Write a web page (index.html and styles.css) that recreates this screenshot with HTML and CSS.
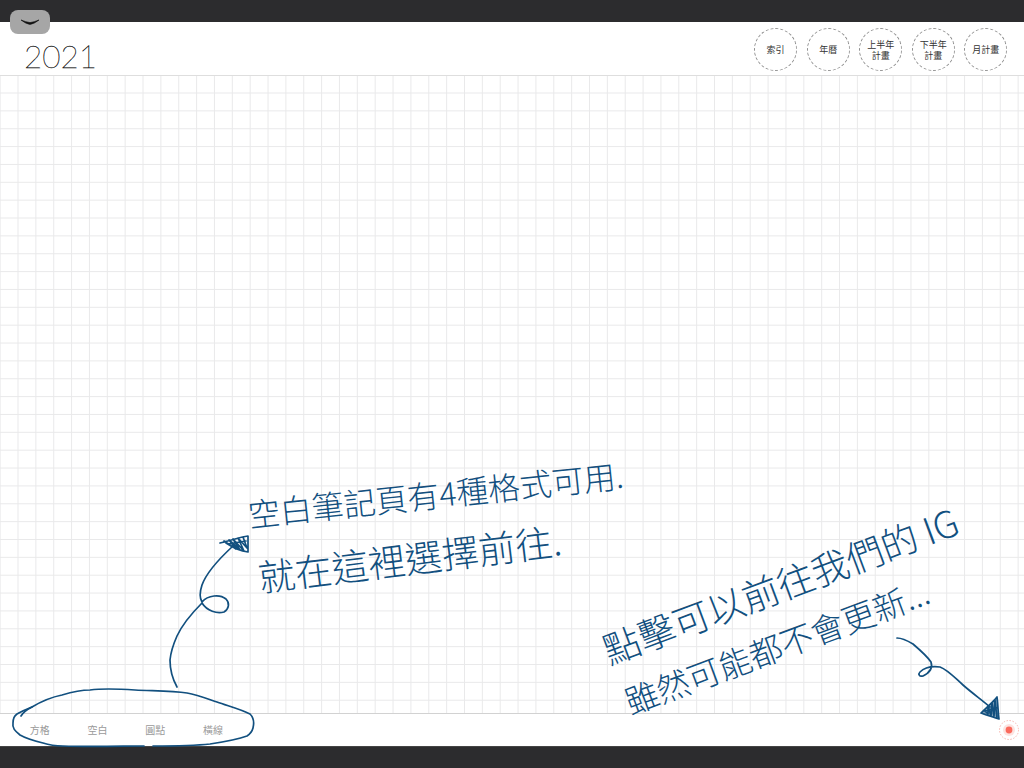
FILE: index.html
```html
<!DOCTYPE html>
<html lang="zh-Hant">
<head>
<meta charset="utf-8">
<title>2021</title>
<link rel="stylesheet" href="styles.css">
</head>
<body>
<div class="page">
  <div class="bar-top"></div>
  <header class="header">
    <h1 class="title">2021</h1>
    <nav class="nav">
      <a class="circle">索引</a>
      <a class="circle">年曆</a>
      <a class="circle">上半年<br>計畫</a>
      <a class="circle">下半年<br>計畫</a>
      <a class="circle">月計畫</a>
    </nav>
  </header>
  <main class="grid"></main>
  <footer class="toolbar">
    <a class="tab">方格</a>
    <a class="tab">空白</a>
    <a class="tab">圓點</a>
    <a class="tab">橫線</a>
    <svg class="record" width="22" height="22" viewBox="0 0 22 22">
      <circle cx="11" cy="11" r="9.5" fill="none" stroke="#f7b5ae" stroke-width="1" stroke-dasharray="1.5 1.5"/>
      <circle cx="11" cy="11" r="6" fill="#fde3e0"/>
      <circle cx="11" cy="11" r="3.4" fill="#fb6a5d"/>
    </svg>
  </footer>
  <div class="bar-bottom"></div>

  <button class="pull">
    <svg width="20" height="6" viewBox="0 0 20 6"><path d="M1 1 Q6 3 10 3.6 Q14 3 19 1 Q14 5 10 5.4 Q6 5 1 1Z" fill="#111" stroke="#111" stroke-width=".6" stroke-linejoin="round"/></svg>
  </button>

  <svg class="ink" width="1024" height="768" viewBox="0 0 1024 768">
    <g fill="none" stroke="#12507f" stroke-width="1.7" stroke-linecap="round" stroke-linejoin="round">
      <path d="M21 716 C24 711 28 709 32 707 C42 701 52 697 62 695 C72 692 80 690 90 690 C105 688 120 689 135 690 C155 691 172 691 187 693 C198 695 208 699 217 702 C228 706 240 709 250 714 C254 718 254 724 253 728 C252 732 250 734 247 736 C236 740 223 742 210 744 C192 746 172 746 153 746"/>
      <path d="M144 746 C125 746 90 747 63 746 C55 746 49 745 43 743 C35 741 27 739 20 735 C15 731 12 728 13 723 C13 719 14 716 17 714 C22 711 27 709 32 707"/>
      <path d="M177 687 C172 678 170 670 170 660 C171 650 173 645 177 636 C183 623 192 613 202 603 C207 611 217 614 224 612 C229 609 230 603 226 599 C220 594 208 595 202 602 C199 597 200 591 202 585 C207 571 220 558 233 546"/>
      <path d="M220 543 C229 541 240 537 248 536 C248 541 248 547 248 552 C241 551 232 547 226 543 M224 541 L236 549 L229 540 L240 550 L233 539 L244 551 L238 538 L247 548 L243 537 M228 544 L246 541"/>
      <path d="M897 638 C903 638 908 641 913 644 C920 650 927 656 931 662 C933 668 929 673 923 676 C919 677 918 674 920 672 C924 668 932 666 940 667 C948 670 955 678 963 685 C972 693 982 700 990 707"/>
      <path d="M981 713 C986 708 993 702 997 697 C998 704 998 712 999 719 C993 717 986 715 981 713Z M985 711 L988 714 L988 706 L991 716 L992 703 L994 716 L995 700 L997 718 M984 711 L997 708" fill="#12507f" fill-opacity=".55"/>
    </g>
  </svg>

  <p class="note note-a">空白筆記頁有4種格式可用.</p>
  <p class="note note-b">就在這裡選擇前往.</p>
  <p class="note note-c">點擊可以前往我們的 IG</p>
  <p class="note note-d">雖然可能都不會更新...</p>
</div>
</body>
</html>
```
FILE: styles.css
```css
* { box-sizing: border-box; }
html, body { margin: 0; padding: 0; }
body {
  width: 1024px;
  height: 768px;
  overflow: hidden;
  background: #fff;
  font-family: "Noto Sans CJK TC", "Liberation Sans", sans-serif;
}
.page {
  position: relative;
  width: 1024px;
  height: 768px;
  display: flex;
  flex-direction: column;
  overflow: hidden;
}
.bar-top { height: 22px; background: #2c2c2e; flex: none; }
.bar-bottom { height: 22px; background: #2c2c2e; flex: none; border-top: 1px solid #444; }
.header {
  height: 54px;
  flex: none;
  display: flex;
  align-items: flex-start;
  justify-content: space-between;
  padding: 6px 16.7px 0 24px;
  background: #fff;
  border-bottom: 1px solid #dedede;
}
.title {
  margin: 10px 0 0;
  font-family: Lato, "Liberation Sans", sans-serif;
  font-weight: 100;
  font-size: 31.5px;
  line-height: 36px;
  color: #111;
  opacity: .99;
  -webkit-text-stroke: .3px #111;
}
.nav { display: flex; gap: 9.55px; }
.circle {
  width: 43px;
  height: 43px;
  border: 1px dashed #8f8f8f;
  border-radius: 50%;
  display: flex;
  align-items: center;
  justify-content: center;
  text-align: center;
  font-size: 9px;
  line-height: 11px;
  color: #333;
}
.grid {
  flex: 1;
  background-color: #fff;
  background-image:
    linear-gradient(to right, #e9e9ea 1px, transparent 1px),
    linear-gradient(to bottom, #e9e9ea 1px, transparent 1px);
  background-size: 17.87px 17.87px;
  background-position: 17.5px 16.5px;
}
.toolbar {
  height: 33px;
  flex: none;
  display: flex;
  align-items: center;
  padding-left: 11px;
  background: #fff;
  border-top: 1px solid #d2d2d2;
}
.tab {
  width: 57.7px;
  text-align: center;
  font-size: 10px;
  line-height: 14px;
  color: #9a9a9a;
}
.record { margin-left: auto; margin-right: 4px; }
.pull {
  position: absolute;
  left: 10px;
  top: 10px;
  width: 40px;
  height: 24px;
  padding: 9px 0 0;
  border: 0;
  border-radius: 8px;
  background: #a6a6a6;
  display: flex;
  justify-content: center;
}
.ink { position: absolute; left: 0; top: 0; pointer-events: none; }
.note {
  position: absolute;
  margin: 0;
  white-space: nowrap;
  color: #12507f;
  font-weight: 200;
  line-height: 40px;
  transform-origin: 0 50%;
}
.note-a { left: 248px; top: 493px; font-size: 32px; transform: rotate(-6deg); }
.note-b { left: 258px; top: 556px; font-size: 37px; transform: rotate(-7deg); }
.note-c { left: 604px; top: 630px; font-size: 37px; transform: rotate(-20.5deg); }
.note-d { left: 626px; top: 682px; font-size: 33px; transform: rotate(-20.5deg); }
```
